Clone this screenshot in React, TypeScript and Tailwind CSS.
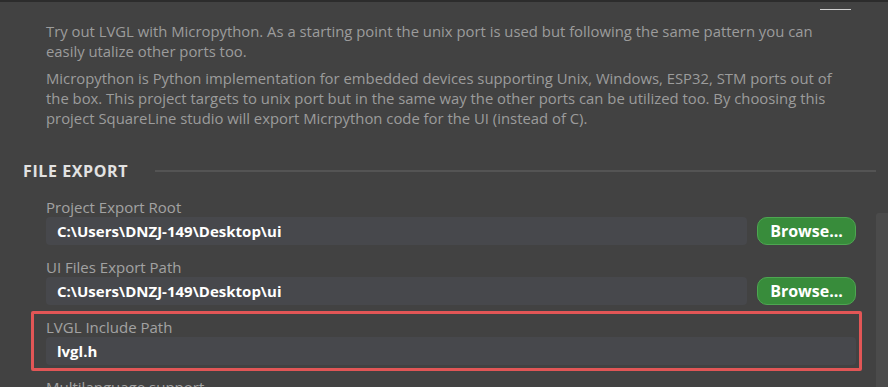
import React from 'react';

const font = { fontFamily: '"Open Sans", "Noto Sans", sans-serif' };

function PathRow({ label, value, browse }: { label: string; value: string; browse?: boolean }) {
  return (
    <div>
      <div className="text-[15px] leading-[20px] text-[#a2a2a2]">{label}</div>
      <div className="flex items-center gap-[10px]">
        <div className="flex-1 h-[28px] rounded-[4px] bg-[#47484c] pl-[11px] flex items-center text-[15px] font-bold text-white">
          {value}
        </div>
        {browse && (
          <button className="w-[99px] h-[28px] rounded-[10px] bg-[#388c3b] border border-[#4da651] text-white font-bold text-[16px] leading-none">
            Browse...
          </button>
        )}
      </div>
    </div>
  );
}

export default function App() {
  return (
    <div className="w-[888px] h-[387px] overflow-hidden bg-[#424242] border-t-2 border-[#2c2c2c] flex" style={font}>
      <div className="flex-1 min-w-0">
        <div className="ml-[820px] mt-[7px] w-[31px] h-px bg-[#cfcfcf]"></div>

        <div className="pl-[46px] pr-[20px] mt-[11px] text-[14.85px] leading-[20px] text-[#9c9c9c] whitespace-nowrap">
          <p>
            Try out LVGL with Micropython. As a starting point the unix port is used but following the same pattern you can
            <br />
            easily utalize other ports too.
          </p>
          <p className="mt-[7px]">
            Micropython is Python implementation for embedded devices supporting Unix, Windows, ESP32, STM ports out of
            <br />
            the box. This project targets to unix port but in the same way the other ports can be utilized too. By choosing this
            <br />
            project SquareLine studio will export Micrpython code for the UI (instead of C).
          </p>
        </div>

        <div className="mt-[31px] pl-[23px] flex items-center">
          <span className="text-[16px] leading-[24px] font-bold text-[#e2e2e2] tracking-[0.6px]">FILE EXPORT</span>
          <div className="flex-1 ml-[27px] h-[2px] bg-[#545454]"></div>
        </div>

        <div className="pl-[46px] pr-[20px] mt-[14px]">
          <PathRow label="Project Export Root" value="C:\Users\DNZJ-149\Desktop\ui" browse />
          <div className="mt-[12px]">
            <PathRow label="UI Files Export Path" value="C:\Users\DNZJ-149\Desktop\ui" browse />
          </div>
        </div>

        <div className="ml-[31px] mr-[14px] mt-[6px] border-[3px] border-[#e25656] rounded-[2px] pl-[12px] pr-[3px] py-[3px]">
          <PathRow label="LVGL Include Path" value="lvgl.h" />
        </div>

        <div className="pl-[46px] mt-[6px] text-[15px] leading-[20px] text-[#a2a2a2]">Multilanguage support</div>
      </div>

      <div className="w-[12px] pt-[211px]">
        <div className="h-[200px] rounded-tl-[3px] bg-[#4b4b4b]"></div>
      </div>
    </div>
  );
}
